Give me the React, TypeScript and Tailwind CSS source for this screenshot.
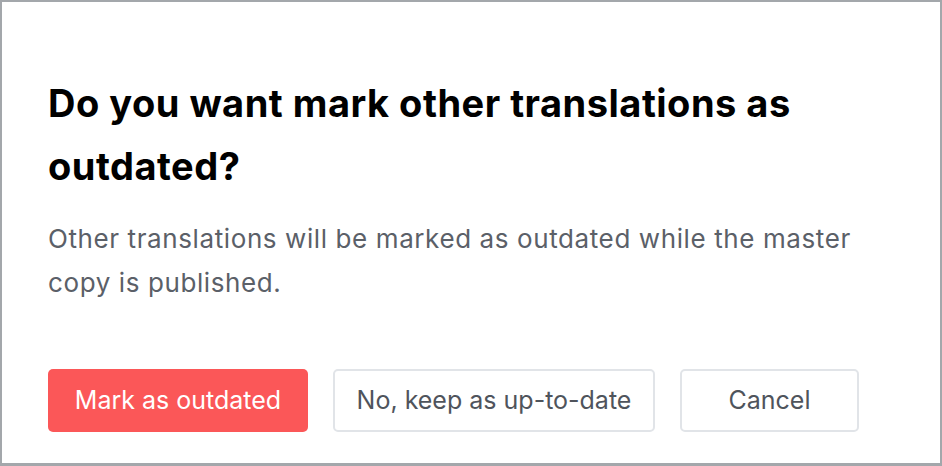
import React from 'react';

export default function App() {
  return (
    <div className="w-[942px] h-[466px] bg-white border-2 border-b-[3px] border-[#a3a7ab] font-['Inter',sans-serif]">
      <div className="pl-[46px] pr-[40px] pt-[70px]">
        <h1 className="text-[38px] leading-[63px] font-bold text-black tracking-[0.5px]">
          Do you want mark other translations as outdated?
        </h1>
        <p className="mt-[19px] text-[26px] leading-[44px] text-[#5b6068] tracking-[0.6px] max-w-[830px]">
          Other translations will be marked as outdated while the master copy is published.
        </p>
        <div className="mt-[64px] flex gap-[25px]">
          <button className="h-[63px] w-[260px] rounded-[5px] bg-[#fb5758] text-white text-[25px]">
            Mark as outdated
          </button>
          <button className="h-[63px] w-[322px] rounded-[5px] border-2 border-[#e1e4e8] bg-white text-[#4f545c] text-[25px]">
            No, keep as up-to-date
          </button>
          <button className="h-[63px] w-[179px] rounded-[5px] border-2 border-[#e1e4e8] bg-white text-[#4f545c] text-[25px]">
            Cancel
          </button>
        </div>
      </div>
    </div>
  );
}
